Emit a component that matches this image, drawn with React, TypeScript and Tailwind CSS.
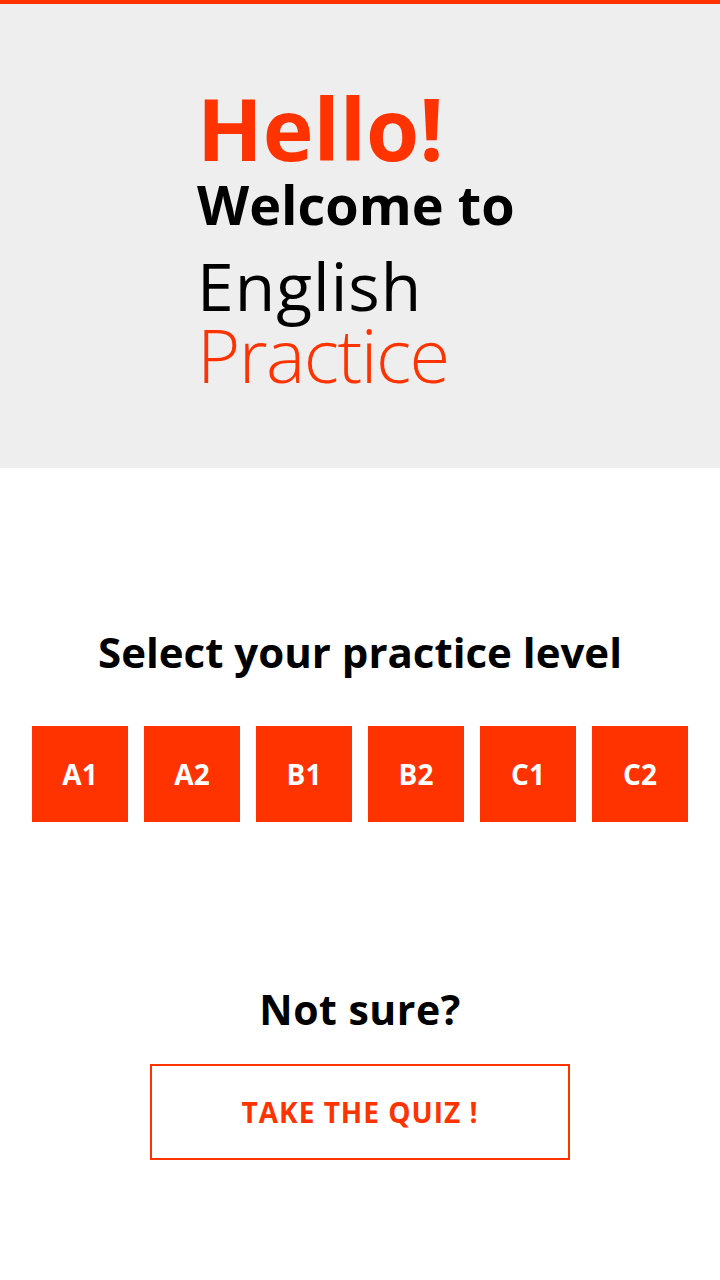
import React from 'react';

const levels = ['A1', 'A2', 'B1', 'B2', 'C1', 'C2'];

export default function App() {
  return (
    <div className="min-h-[1280px] bg-white font-['Open_Sans',sans-serif]">
      <div className="h-[4px] bg-[#ff3300]" />
      <header className="h-[464px] bg-[#eeeeee] pl-[197px] pt-[81px]">
        <h1 className="text-[86px] font-bold leading-none text-[#ff3300]">Hello!</h1>
        <p className="mt-[6px] text-[54px] font-bold leading-none text-black">Welcome to</p>
        <p className="mt-[21px] text-[66px] font-normal leading-none text-black tracking-[1px]">English</p>
        <p className="mt-0 text-[74px] font-light leading-none text-[#ff3300] tracking-[-1.5px]">Practice</p>
      </header>

      <section className="pt-[163px] flex flex-col items-center">
        <h2 className="text-[42px] font-bold leading-none text-black">Select your practice level</h2>
        <div className="mt-[53px] flex gap-4">
          {levels.map(level => (
            <button key={level}
              className="w-24 h-24 bg-[#ff3300] text-white text-[28px] font-bold flex items-center justify-center">
              {level}
            </button>
          ))}
        </div>
      </section>

      <section className="pt-[167px] flex flex-col items-center">
        <h2 className="text-[41px] font-bold leading-none text-black tracking-[0.5px]">Not sure?</h2>
        <button className="mt-[34px] w-[420px] h-24 border-2 border-[#ff3300] text-[#ff3300] text-[28px] font-bold tracking-[1px]">
          TAKE THE QUIZ !
        </button>
      </section>
    </div>
  );
}
